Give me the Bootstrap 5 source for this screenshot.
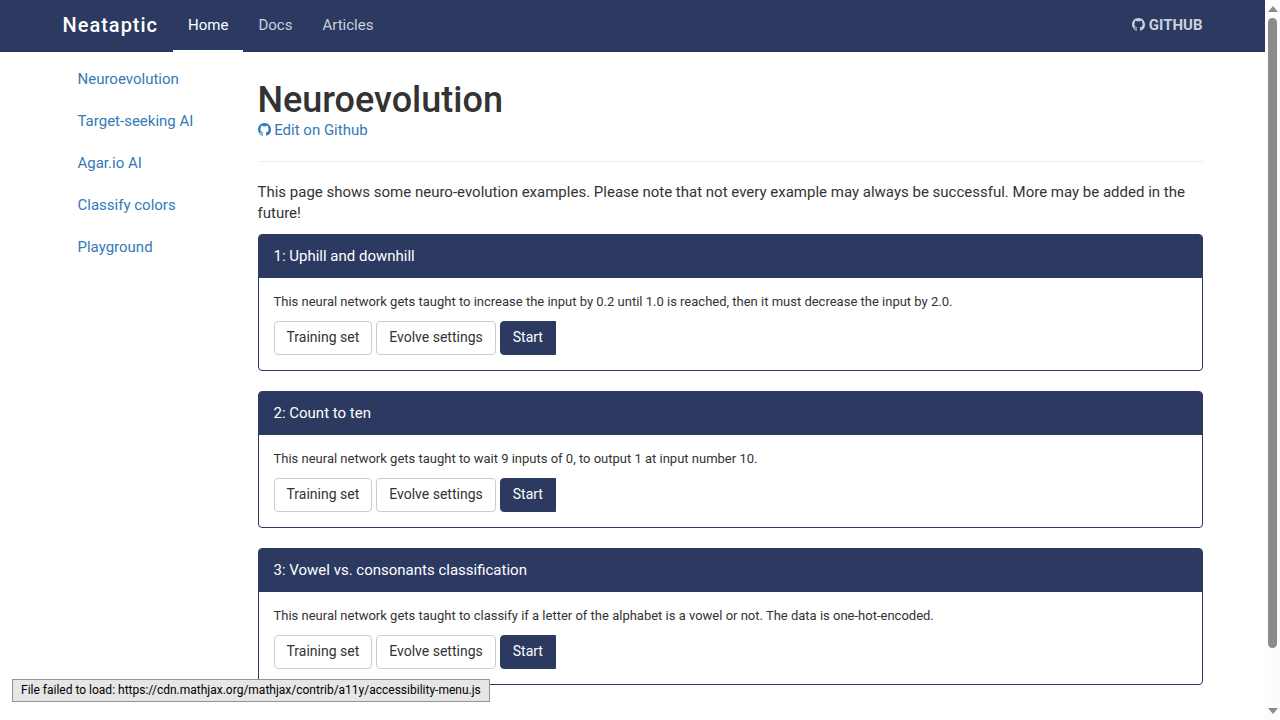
<!DOCTYPE html>
<html lang="en">
<head>
<meta charset="utf-8">
<meta name="viewport" content="width=device-width, initial-scale=1">
<title>Neataptic - Neuroevolution</title>
<link href="https://cdn.jsdelivr.net/npm/bootstrap@5.3.0/dist/css/bootstrap.min.css" rel="stylesheet">
<style>
  :root { --navy: #2c3961; --link: #337ab7; --scroll: 15px; }
  body { font-family: Roboto, sans-serif; font-size: 15px; line-height: 21px; color: #333; padding-right: var(--scroll); }
  .container { --bs-gutter-x: 30px; max-width: 1170px; }
  .row { --bs-gutter-x: 30px; }
  a { color: var(--link); text-decoration: none; }
  .octocat { width: 13px; height: 13px; fill: currentColor; vertical-align: -1px; }

  .site-nav { background: var(--navy); padding: 0; height: 52px; border-bottom: 1px solid #263154; margin-right: calc(-1 * var(--scroll)); padding-right: var(--scroll); }
  .site-nav .navbar-brand { color: #fff; font-size: 20px; font-weight: 500; letter-spacing: 1px; line-height: 20px; padding: 14px 15px 16px 0; margin: 0; }
  .site-nav .navbar-nav .nav-link { color: #ccd0dc; line-height: 20px; height: 52px; padding: 15px; margin-bottom: -1px; }
  .site-nav .navbar-nav .active { color: #fff; border-bottom: 2px solid #fff; }
  .site-nav .navbar-nav .repo { font-weight: 700; text-transform: uppercase; padding-right: 0; }

  .side-nav { padding-top: 6px; }
  .side-nav .nav-link { color: var(--link); line-height: 22px; padding: 10px 15px; }

  .page-title { font-size: 36px; line-height: 40px; font-weight: 500; margin: 28px 0 0; }
  .page-head { border-bottom: 1px solid #eee; padding-bottom: 20px; margin-bottom: 20px; }
  .intro { margin-bottom: 10px; }

  .example { border: 1px solid var(--navy); border-radius: 4px; margin-bottom: 20px; }
  .example .card-header { background: var(--navy); color: #fff; border: 0; border-radius: 2px 2px 0 0; padding: 11px 15px; }
  .example h2 { font-size: 15px; line-height: 21px; font-weight: 400; margin: 0; }
  .example .card-body { padding: 15px; }
  .example p { font-size: 13px; line-height: 18px; margin-bottom: 10px; }
  .example .btn { font-size: 14px; line-height: 20px; padding: 5px 12px 7px; border-radius: 4px; color: #333; border: 1px solid #ccc; background: #fff; }
  .example .btn-start { background: var(--navy); border-color: var(--navy); color: #fff; border-radius: 4px 0 0 4px; }

  .load-message { left: 12px; bottom: 18px; font-size: 12px; line-height: 17px; color: #000; background: #e6e6e6; border: 1px solid #949494; padding: 2px 8px; }
  .scroll-track { top: 0; right: 0; bottom: 0; width: var(--scroll); background: #fcfcfc; padding: 6px 0; z-index: 1040; }
  .scroll-track svg { width: 10px; height: 6px; fill: #8b8b8b; flex: none; }
  .scroll-thumb { width: 9px; height: 89%; margin-top: 6px; margin-bottom: auto; background: #8b8b8b; border-radius: 5px; }
</style>
</head>
<body>
<svg class="d-none" aria-hidden="true">
  <symbol id="octocat" viewBox="0 0 16 16"><path d="M8 0C3.58 0 0 3.58 0 8c0 3.54 2.29 6.53 5.47 7.59.4.07.55-.17.55-.38 0-.19-.01-.82-.01-1.49-2.01.37-2.53-.49-2.69-.94-.09-.23-.48-.94-.82-1.13-.28-.15-.68-.52-.01-.53.63-.01 1.08.58 1.23.82.72 1.21 1.87.87 2.33.66.07-.52.28-.87.51-1.07-1.78-.2-3.64-.89-3.64-3.95 0-.87.31-1.59.82-2.15-.08-.2-.36-1.02.08-2.12 0 0 .67-.21 2.2.82A7.6 7.6 0 0 1 8 3.86c.68 0 1.36.09 2 .27 1.53-1.04 2.2-.82 2.2-.82.44 1.1.16 1.92.08 2.12.51.56.82 1.27.82 2.15 0 3.07-1.87 3.75-3.65 3.95.29.25.54.73.54 1.48 0 1.07-.01 1.93-.01 2.2 0 .21.15.46.55.38A8.01 8.01 0 0 0 16 8c0-4.42-3.58-8-8-8z"/></symbol>
</svg>

<nav class="navbar navbar-expand site-nav" aria-label="Main">
  <div class="container">
    <a class="navbar-brand" href="#">Neataptic</a>
    <div class="navbar-nav me-auto">
      <a class="nav-link active" href="#" aria-current="page">Home</a>
      <a class="nav-link" href="#">Docs</a>
      <a class="nav-link" href="#">Articles</a>
    </div>
    <div class="navbar-nav">
      <a class="nav-link repo" href="#"><svg class="octocat" aria-hidden="true"><use href="#octocat"/></svg> Github</a>
    </div>
  </div>
</nav>

<div class="container">
  <div class="row">
    <aside class="col-md-2">
      <nav class="nav flex-column side-nav" aria-label="Examples">
        <a class="nav-link" href="#">Neuroevolution</a>
        <a class="nav-link text-nowrap" href="#">Target-seeking AI</a>
        <a class="nav-link" href="#">Agar.io AI</a>
        <a class="nav-link" href="#">Classify colors</a>
        <a class="nav-link" href="#">Playground</a>
      </nav>
    </aside>
    <main class="col-md-10">
      <header class="page-head">
        <h1 class="page-title">Neuroevolution</h1>
        <a class="d-block" href="#"><svg class="octocat" aria-hidden="true"><use href="#octocat"/></svg> Edit on Github</a>
      </header>
      <p class="intro">This page shows some neuro-evolution examples. Please note that not every example may always be successful. More may be added in the future!</p>

      <section class="card example">
        <div class="card-header"><h2>1: Uphill and downhill</h2></div>
        <div class="card-body">
          <p>This neural network gets taught to increase the input by 0.2 until 1.0 is reached, then it must decrease the input by 2.0.</p>
          <div class="d-flex gap-1">
            <button type="button" class="btn">Training set</button>
            <button type="button" class="btn">Evolve settings</button>
            <button type="button" class="btn btn-start">Start</button>
          </div>
        </div>
      </section>

      <section class="card example">
        <div class="card-header"><h2>2: Count to ten</h2></div>
        <div class="card-body">
          <p>This neural network gets taught to wait 9 inputs of 0, to output 1 at input number 10.</p>
          <div class="d-flex gap-1">
            <button type="button" class="btn">Training set</button>
            <button type="button" class="btn">Evolve settings</button>
            <button type="button" class="btn btn-start">Start</button>
          </div>
        </div>
      </section>

      <section class="card example">
        <div class="card-header"><h2>3: Vowel vs. consonants classification</h2></div>
        <div class="card-body">
          <p>This neural network gets taught to classify if a letter of the alphabet is a vowel or not. The data is one-hot-encoded.</p>
          <div class="d-flex gap-1">
            <button type="button" class="btn">Training set</button>
            <button type="button" class="btn">Evolve settings</button>
            <button type="button" class="btn btn-start">Start</button>
          </div>
        </div>
      </section>
    </main>
  </div>
</div>

<div class="load-message position-fixed" role="status">File failed to load: https://cdn.mathjax.org/mathjax/contrib/a11y/accessibility-menu.js</div>

<div class="scroll-track position-fixed d-flex flex-column align-items-center" aria-hidden="true">
  <svg viewBox="0 0 10 6"><path d="M5 0l5 6H0z"/></svg>
  <div class="scroll-thumb"></div>
  <svg viewBox="0 0 10 6"><path d="M0 0h10L5 6z"/></svg>
</div>
<script src="https://cdn.jsdelivr.net/npm/bootstrap@5.3.0/dist/js/bootstrap.bundle.min.js"></script>
</body>
</html>
